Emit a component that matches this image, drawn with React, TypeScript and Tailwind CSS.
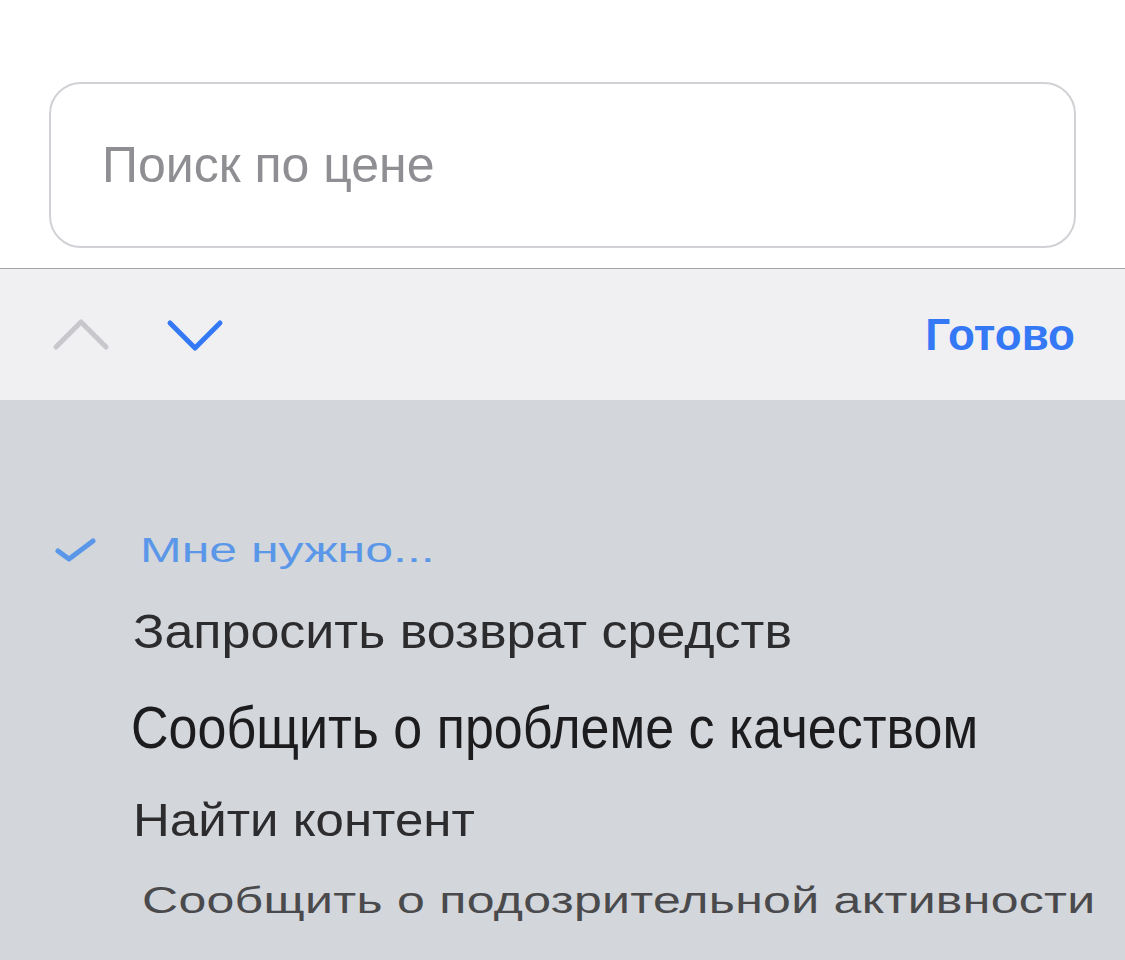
import React from "react"

const font = { fontFamily: '"Liberation Sans", Arial, sans-serif' }

function ChevronUp() {
  return (
    <svg width="58" height="36" viewBox="0 0 58 36" fill="none">
      <path d="M4 30 L29 5 L54 30" stroke="#c7c7cc" strokeWidth="5" strokeLinecap="round" strokeLinejoin="round" />
    </svg>
  )
}

function ChevronDown() {
  return (
    <svg width="58" height="36" viewBox="0 0 58 36" fill="none">
      <path d="M4 6 L29 31 L54 6" stroke="#3478f6" strokeWidth="5" strokeLinecap="round" strokeLinejoin="round" />
    </svg>
  )
}

export default function App() {
  return (
    <div className="w-[1125px] h-[960px] flex flex-col overflow-hidden bg-white" style={font}>
      {/* search field */}
      <div className="h-[268px] bg-white pt-[82px] px-[49px]">
        <div className="h-[166px] rounded-[32px] border-2 border-[#d1d1d6] flex items-center pl-[51px]">
          <span className="text-[50px] text-[#8e8e93] leading-none">Поиск по цене</span>
        </div>
      </div>
      <div className="h-px bg-[#a3a3a8]" />

      {/* toolbar */}
      <div className="h-[131px] bg-[#f0f0f2] flex items-center justify-between pl-[52px] pr-[50px]">
        <div className="flex items-center gap-[56px]">
          <ChevronUp />
          <ChevronDown />
        </div>
        <span className="text-[44px] font-bold text-[#3478f6] leading-none">Готово</span>
      </div>

      {/* picker */}
      <div className="flex-1 bg-[#d3d6db] pt-[110px] flex flex-col">
        <div className="h-[80px] flex items-center">
          <div className="w-[140px] pl-[55px] flex items-center">
            <svg width="42" height="26" viewBox="0 0 42 26" fill="none">
              <path d="M3 14 L14 22 L38 4" stroke="#5a97e8" strokeWidth="5" strokeLinecap="round" strokeLinejoin="round" />
            </svg>
          </div>
          <span className="text-[50px] text-[#5a97e8] leading-none whitespace-nowrap scale-y-[0.72] origin-left">Мне нужно...</span>
        </div>
        <div className="h-[82px] flex items-center pl-[133px]">
          <span className="text-[52px] text-[#2c2c2e] leading-none whitespace-nowrap scale-y-[0.94]">Запросить возврат средств</span>
        </div>
        <div className="h-[110px] flex items-center pl-[131px]">
          <span className="text-[52px] text-[#1c1c1e] leading-none whitespace-nowrap scale-y-[1.15]">Сообщить о проблеме с качеством</span>
        </div>
        <div className="h-[76px] flex items-center pl-[133px]">
          <span className="text-[51px] text-[#2c2c2e] leading-none whitespace-nowrap scale-y-[0.9]">Найти контент</span>
        </div>
        <div className="h-[84px] flex items-center pl-[142px]">
          <span className="text-[50px] tracking-[0.3px] text-[#4a4a4d] leading-none whitespace-nowrap scale-y-[0.75]">Сообщить о подозрительной активности</span>
        </div>
      </div>
    </div>
  )
}
